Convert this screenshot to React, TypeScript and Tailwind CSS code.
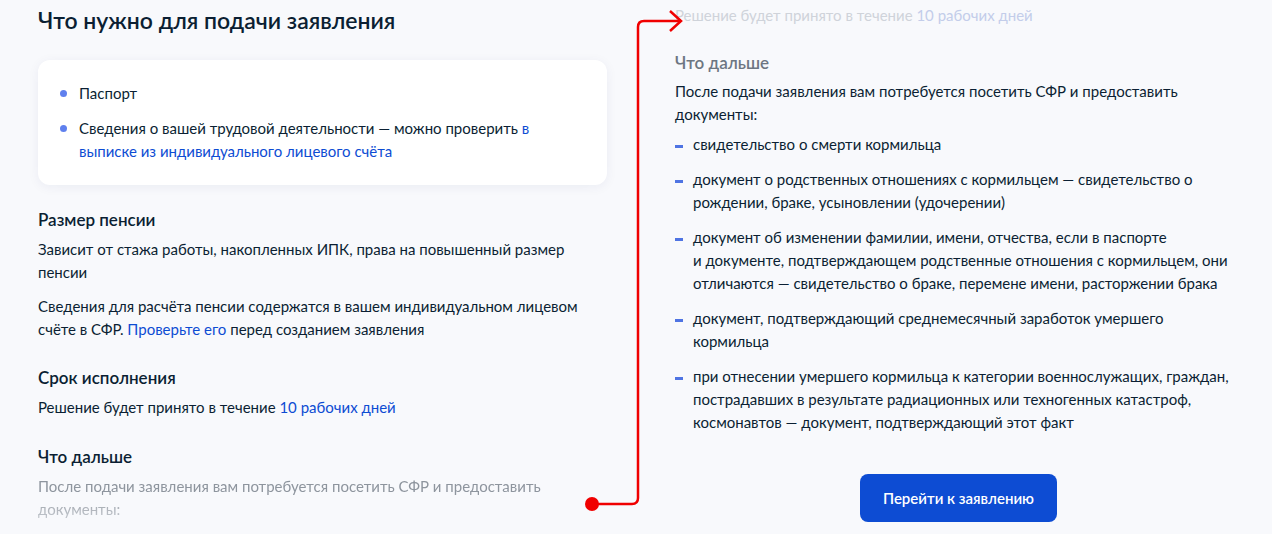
import React from "react";

const docs: string[][] = [
  ["свидетельство о смерти кормильца"],
  ["документ о родственных отношениях с кормильцем — свидетельство о", "рождении, браке, усыновлении (удочерении)"],
  [
    "документ об изменении фамилии, имени, отчества, если в паспорте",
    "и документе, подтверждающем родственные отношения с кормильцем, они",
    "отличаются — свидетельство о браке, перемене имени, расторжении брака",
  ],
  ["документ, подтверждающий среднемесячный заработок умершего", "кормильца"],
  [
    "при отнесении умершего кормильца к категории военнослужащих, граждан,",
    "пострадавших в результате радиационных или техногенных катастроф,",
    "космонавтов — документ, подтверждающий этот факт",
  ],
];

function Connector() {
  return (
    <svg className="pointer-events-none absolute inset-0" width="1272" height="534" viewBox="0 0 1272 534">
      <path
        d="M 592 504 H 632 Q 638 504 638 498 V 27 Q 638 21 644 21 H 681"
        fill="none"
        stroke="#f00000"
        strokeWidth="2.5"
      />
      <path d="M 670 11 L 681 21 L 670 31" fill="none" stroke="#f00000" strokeWidth="2.5" />
      <circle cx="592" cy="504" r="7" fill="#f00000" />
    </svg>
  );
}

export default function App() {
  return (
    <div
      className="relative flex h-[534px] w-[1272px] overflow-hidden bg-[#f8f9fc] text-[15px] leading-[23px] text-[#0b1f33]"
      style={{ fontFamily: "Lato, 'Noto Sans', sans-serif" }}
    >
      {/* left screen */}
      <div className="w-[640px] shrink-0 pl-[38px] pr-[33px]">
        <h2 className="pt-[6px] text-[23px] font-semibold leading-[28px]">Что нужно для подачи заявления</h2>

        <div className="mt-[26px] rounded-xl bg-white px-[22px] pt-[22px] pb-[22px] shadow-[0_2px_12px_rgba(0,40,110,0.06)]">
          <ul className="flex flex-col gap-[12px]">
            <li className="flex">
              <span className="mt-[8px] mr-[12px] h-[7px] w-[7px] shrink-0 rounded-full bg-[#5f80ee]" />
              <span>Паспорт</span>
            </li>
            <li className="flex">
              <span className="mt-[8px] mr-[12px] h-[7px] w-[7px] shrink-0 rounded-full bg-[#5f80ee]" />
              <div>
                <span className="block whitespace-nowrap">
                  Сведения о вашей трудовой деятельности — можно проверить <span className="text-[#0d4cd3]">в</span>
                </span>
                <span className="block whitespace-nowrap text-[#0d4cd3]">выписке из индивидуального лицевого счёта</span>
              </div>
            </li>
          </ul>
        </div>

        <h3 className="mt-[23px] text-[17px] font-semibold leading-[24px]">Размер пенсии</h3>
        <div className="mt-[6px]">
          <span className="block whitespace-nowrap">Зависит от стажа работы, накопленных ИПК, права на повышенный размер</span>
          <span className="block">пенсии</span>
        </div>
        <div className="mt-[11px]">
          <span className="block whitespace-nowrap">Сведения для расчёта пенсии содержатся в вашем индивидуальном лицевом</span>
          <span className="block whitespace-nowrap">
            счёте в СФР. <span className="text-[#0d4cd3]">Проверьте его</span> перед созданием заявления
          </span>
        </div>

        <h3 className="mt-[25px] text-[17px] font-semibold leading-[24px]">Срок исполнения</h3>
        <p className="mt-[6px]">
          Решение будет принято в течение <span className="text-[#0d4cd3]">10 рабочих дней</span>
        </p>

        <h3 className="mt-[26px] text-[17px] font-semibold leading-[24px]">Что дальше</h3>
        <div className="mt-[6px] text-[#8e959e] [mask-image:linear-gradient(to_bottom,black_40%,rgba(0,0,0,0.45)_100%)]">
          <span className="block whitespace-nowrap">После подачи заявления вам потребуется посетить СФР и предоставить</span>
          <span className="block">документы:</span>
        </div>
      </div>

      {/* right screen */}
      <div className="w-[600px] pl-[35px]">
        <p className="pt-[4px] text-[#cfd3da]">
          Решение будет принято в течение <span className="text-[#c3cdea]">10 рабочих дней</span>
        </p>

        <h3 className="mt-[24px] text-[17px] font-semibold leading-[24px] text-[#6d7682]">Что дальше</h3>
        <div className="mt-[5px]">
          <span className="block whitespace-nowrap">После подачи заявления вам потребуется посетить СФР и предоставить</span>
          <span className="block">документы:</span>
        </div>

        <ul className="mt-[7px] flex flex-col gap-[12px]">
          {docs.map((lines, i) => (
            <li key={i} className="flex">
              <span className="mt-[12px] mr-[10px] h-[2.5px] w-[8px] shrink-0 bg-[#4f74e3]" />
              <div>
                {lines.map((l, j) => (
                  <span key={j} className="block whitespace-nowrap">
                    {l}
                  </span>
                ))}
              </div>
            </li>
          ))}
        </ul>

        <div className="mt-[40px] flex w-[567px] justify-center">
          <button className="h-[48px] w-[197px] rounded-lg bg-[#0d4cd3] text-[15px] font-semibold text-white">
            Перейти к заявлению
          </button>
        </div>
      </div>

      <Connector />
    </div>
  );
}
